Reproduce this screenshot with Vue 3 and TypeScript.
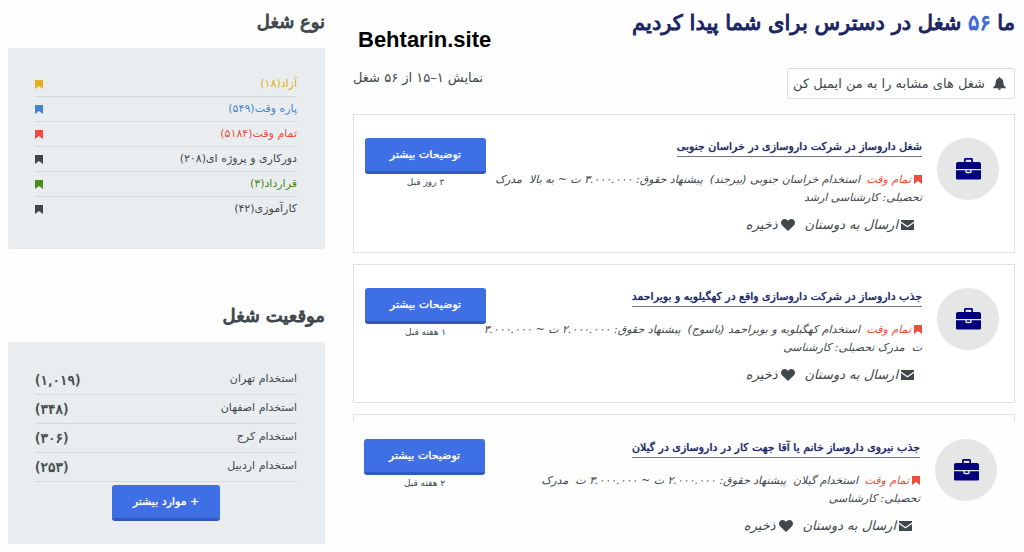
<script setup lang="ts">
interface JobType {
  name: string
  count: string
  tone: string
}

interface JobPlace {
  name: string
  count: string
}

interface Job {
  id: number
  title: string
  lines: [string, string]
  age: string
  open?: boolean
}

const types: JobType[] = [
  { name: 'آزاد', count: '۱۸', tone: 'yellow' },
  { name: 'پاره وقت', count: '۵۴۹', tone: 'blue' },
  { name: 'تمام وقت', count: '۵۱۸۴', tone: 'red' },
  { name: 'دورکاری و پروژه ای', count: '۲۰۸', tone: 'dark' },
  { name: 'قرارداد', count: '۳', tone: 'green' },
  { name: 'کارآموزی', count: '۴۲', tone: 'dark' },
]

const places: JobPlace[] = [
  { name: 'استخدام تهران', count: '(۱,۰۱۹)' },
  { name: 'استخدام اصفهان', count: '(۳۴۸)' },
  { name: 'استخدام کرج', count: '(۳۰۶)' },
  { name: 'استخدام اردبیل', count: '(۲۵۳)' },
]

const jobs: Job[] = [
  {
    id: 1,
    title: 'شغل داروساز در شرکت داروسازی در خراسان جنوبی',
    lines: [
      'استخدام خراسان جنوبی (بیرجند)\u00a0 پیشنهاد حقوق: ۳.۰۰۰.۰۰۰ ت ~ به بالا\u00a0 مدرک',
      'تحصیلی: کارشناسی ارشد',
    ],
    age: '۳ روز قبل',
  },
  {
    id: 2,
    title: 'جذب داروساز در شرکت داروسازی واقع در کهگیلویه و بویراحمد',
    lines: [
      'استخدام کهگیلویه و بویراحمد (یاسوج)\u00a0 پیشنهاد حقوق: ۲.۰۰۰.۰۰۰ ت ~ ۳.۰۰۰.۰۰۰',
      'ت\u00a0 مدرک تحصیلی: کارشناسی',
    ],
    age: '۱ هفته قبل',
  },
  {
    id: 3,
    title: 'جذب نیروی داروساز خانم یا آقا جهت کار در داروسازی در گیلان',
    lines: [
      'استخدام گیلان\u00a0 پیشنهاد حقوق: ۲.۰۰۰.۰۰۰ ت ~ ۳.۰۰۰.۰۰۰ ت\u00a0 مدرک',
      'تحصیلی: کارشناسی',
    ],
    age: '۲ هفته قبل',
    open: true,
  },
]
</script>

<template>
  <div class="page" dir="rtl" lang="fa">
    <main class="results">
      <header class="head">
        <h1>ما <span class="total">۵۶</span> شغل در دسترس برای شما پیدا کردیم</h1>
        <span class="brand" dir="ltr">Behtarin.site</span>
      </header>
      <div class="tools">
        <button type="button" class="alert">
          <svg class="bell" viewBox="0 0 14 14" aria-hidden="true">
            <path d="M7 0c.6 0 1 .4 1 1v.4c1.900.5 3 2 3.100 4.100.1 3 .8 4.400 2.700 5.700v.8H.2v-.8C2.100 9.900 2.800 8.500 2.900 5.500 3 3.400 4.100 1.900 6 1.400V1c0-.6.4-1 1-1zM5.300 12.500h3.400c-.1.900-.8 1.500-1.700 1.500s-1.600-.6-1.700-1.500z" />
          </svg>
          شغل های مشابه را به من ایمیل کن
        </button>
        <p class="showing">نمایش ۱–۱۵ از ۵۶ شغل</p>
      </div>

      <div class="cards">
        <article v-for="job in jobs" :key="job.id" class="card" :class="{ open: job.open }">
          <div class="logo">
            <svg viewBox="0 0 25 22" aria-hidden="true">
              <path fill-rule="evenodd" d="M8 4V1.500C8 .7 8.700 0 9.500 0h6c.8 0 1.500.7 1.500 1.500V4h6c1.100 0 2 .9 2 2v5H0V6c0-1.100.9-2 2-2zm1.700 0h5.600V1.700H9.700z" />
              <path d="M0 12.300h9.300v1.200c0 1 .7 1.700 1.600 1.700h3.200c.9 0 1.600-.7 1.600-1.700v-1.200H25V20c0 .9-.7 1.600-1.600 1.600H1.600C.7 21.600 0 20.900 0 20z" />
              <path d="M10.700 12.300h3.600v1.500h-3.600z" />
            </svg>
          </div>
          <div class="info">
            <h2><a href="#">{{ job.title }}</a></h2>
            <p class="meta">
              <span class="line">
                <svg class="mark red" viewBox="0 0 8 9" aria-hidden="true"><path d="M0 0h8v9L4 6 0 9z" /></svg>
                <span class="red kind">تمام وقت</span>
                {{ job.lines[0] }}
              </span>
              <span class="line">{{ job.lines[1] }}</span>
            </p>
            <div class="links">
              <a href="#">
                <svg class="mail" viewBox="0 0 13 10" aria-hidden="true">
                  <path d="M0 0h13v1.400L6.500 5.900 0 1.400zM0 3l6.500 4.500L13 3v7H0z" />
                </svg>
                ارسال به دوستان
              </a>
              <a href="#">
                <svg class="heart" viewBox="0 0 14 12" aria-hidden="true">
                  <path d="M7 12 1 6.200C-.4 4.700-.3 2.300 1.100.9 2.800-.6 5.500-.2 7 1.900 8.500-.2 11.200-.6 12.900.9c1.400 1.400 1.500 3.800.1 5.300z" />
                </svg>
                ذخیره
              </a>
            </div>
          </div>
          <div class="action">
            <button type="button" class="primary">توضیحات بیشتر</button>
            <span class="age">{{ job.age }}</span>
          </div>
        </article>
      </div>
    </main>

    <aside class="side">
      <section>
        <h3>نوع شغل</h3>
        <div class="panel types">
          <ul>
            <li v-for="t in types" :key="t.name" :class="t.tone">
              <a href="#">{{ t.name }}({{ t.count }})</a>
              <svg class="mark" viewBox="0 0 8 9" aria-hidden="true"><path d="M0 0h8v9L4 6 0 9z" /></svg>
            </li>
          </ul>
        </div>
      </section>
      <section>
        <h3>موقعیت شغل</h3>
        <div class="panel places">
          <ul>
            <li v-for="p in places" :key="p.name">
              <a href="#">{{ p.name }}</a>
              <span class="count">{{ p.count }}</span>
            </li>
          </ul>
          <button type="button" class="primary more">+ موارد بیشتر</button>
        </div>
      </section>
    </aside>
  </div>
</template>

<style>
body {
  margin: 0;
  background: #fefefe;
}
</style>

<style scoped>
.page {
  display: grid;
  grid-template-columns: minmax(0, 662fr) minmax(0, 317fr);
  column-gap: 28px;
  padding: 8px 9px 0 8px;
  font-family: "DejaVu Sans", sans-serif;
  font-size: 11px;
  color: #40484c;
}

h1,
h2,
h3,
p,
ul {
  margin: 0;
  padding: 0;
  font-weight: normal;
}

ul {
  list-style: none;
}

a {
  color: inherit;
  text-decoration: none;
}

svg {
  fill: currentColor;
  flex: none;
}

button {
  font-family: inherit;
  cursor: pointer;
}

.head {
  display: flex;
  justify-content: space-between;
  align-items: flex-start;
  height: 60px;
}

h1 {
  font-size: 21px;
  line-height: 30px;
  color: #1b2565;
  white-space: nowrap;
  -webkit-text-stroke: 1px currentColor;
}

.total {
  color: #4169d8;
}

.brand {
  padding: 18px 0 0 5px;
  font: bold 22px/28px "Liberation Sans", sans-serif;
  color: #000;
}

.tools {
  display: flex;
  justify-content: space-between;
  align-items: flex-start;
}

.alert {
  display: flex;
  align-items: center;
  gap: 8px;
  height: 31px;
  padding: 0 8px 0 5px;
  border: 1px solid #dcdfdf;
  border-radius: 2px;
  background: #fff;
  color: inherit;
  font-size: 13px;
  white-space: nowrap;
}

.bell {
  width: 13px;
  height: 13px;
}

.showing {
  font-size: 13px;
  line-height: 20px;
}

.cards {
  display: grid;
  grid-template-columns: minmax(0, 1fr);
  gap: 11px;
  margin-top: 15px;
}

.card {
  display: flex;
  align-items: flex-start;
  min-height: 139px;
  padding: 23px 15px 0 11px;
  border: 1px solid #e0e2e2;
  box-sizing: border-box;
  background: #fff;
}

.card.open {
  min-height: 130px;
  padding: 24px 17px 0 10px;
  border-color: #e0e2e2 transparent transparent;
  background:
    linear-gradient(#e0e2e2, #e0e2e2) top left / 1px 8px no-repeat border-box,
    linear-gradient(#e0e2e2, #e0e2e2) top right / 1px 8px no-repeat border-box;
}

.logo {
  display: grid;
  place-items: center;
  flex: none;
  width: 62px;
  height: 62px;
  border-radius: 50%;
  background: #e5e7e7;
  color: #02027c;
}

.logo svg {
  width: 25px;
  height: 22px;
}

.info {
  flex: 1;
  min-width: 0;
  margin-inline-start: 15px;
}

h2 {
  font-size: 11px;
  line-height: 18px;
  color: #1b2565;
  white-space: nowrap;
  text-shadow: 0 0 1px currentColor;
}

h2 a {
  display: inline-block;
  border-bottom: 1px solid #74777f;
}

.meta {
  margin-top: 14px;
  font-size: 11px;
  line-height: 18px;
  font-style: italic;
}

.line {
  display: block;
  white-space: nowrap;
}

.mark {
  width: 8px;
  height: 9px;
}

.line .mark {
  margin-inline-end: 3px;
  vertical-align: -1px;
}

.kind {
  margin-inline-end: 3px;
}

.links {
  display: flex;
  gap: 10px;
  margin-top: 8px;
  padding-inline-start: 8px;
  font-size: 13px;
  line-height: 20px;
  font-style: italic;
}

.links a {
  display: flex;
  align-items: center;
  gap: 3px;
  white-space: nowrap;
}

.mail {
  width: 13px;
  height: 10px;
}

.heart {
  width: 14px;
  height: 12px;
}

.action {
  display: flex;
  flex-direction: column;
  align-items: center;
  flex: none;
  width: 121px;
}

.primary {
  width: 100%;
  height: 36px;
  padding: 0;
  border: 0;
  border-bottom: 3px solid #3458bd;
  border-radius: 3px;
  background: #3f6fe4;
  color: #fff;
  font-size: 11px;
  text-shadow: 0 0 1px currentColor;
}

.age {
  font-size: 9px;
  line-height: 16px;
}

h3 {
  font-size: 18px;
  line-height: 28px;
  -webkit-text-stroke: 1px currentColor;
}

.panel {
  background: #e9edef;
  padding: 24px 28px 0 27px;
  box-sizing: border-box;
}

.types {
  height: 201px;
  margin-top: 12px;
}

.places {
  height: 202px;
  margin-top: 12px;
}

.side section + section {
  margin-top: 53px;
}

li {
  display: flex;
  align-items: center;
  justify-content: space-between;
  border-bottom: 1px solid #d6dadb;
}

.types li {
  height: 24px;
}

.types a {
  padding-bottom: 2px;
}

.types li:last-child {
  border-bottom: 0;
}

.places li {
  height: 28px;
}

.places a {
  padding-bottom: 4px;
}

.count {
  font-size: 14px;
  text-shadow: 0 0 1px currentColor;
}

.more {
  display: block;
  width: 108px;
  margin: 3px auto 0;
}

.yellow {
  color: #e2b01e;
}

.blue {
  color: #4585cf;
}

.red {
  color: #ee4d3c;
}

.green {
  color: #4c8a22;
}

.dark {
  color: #40484c;
}
</style>
